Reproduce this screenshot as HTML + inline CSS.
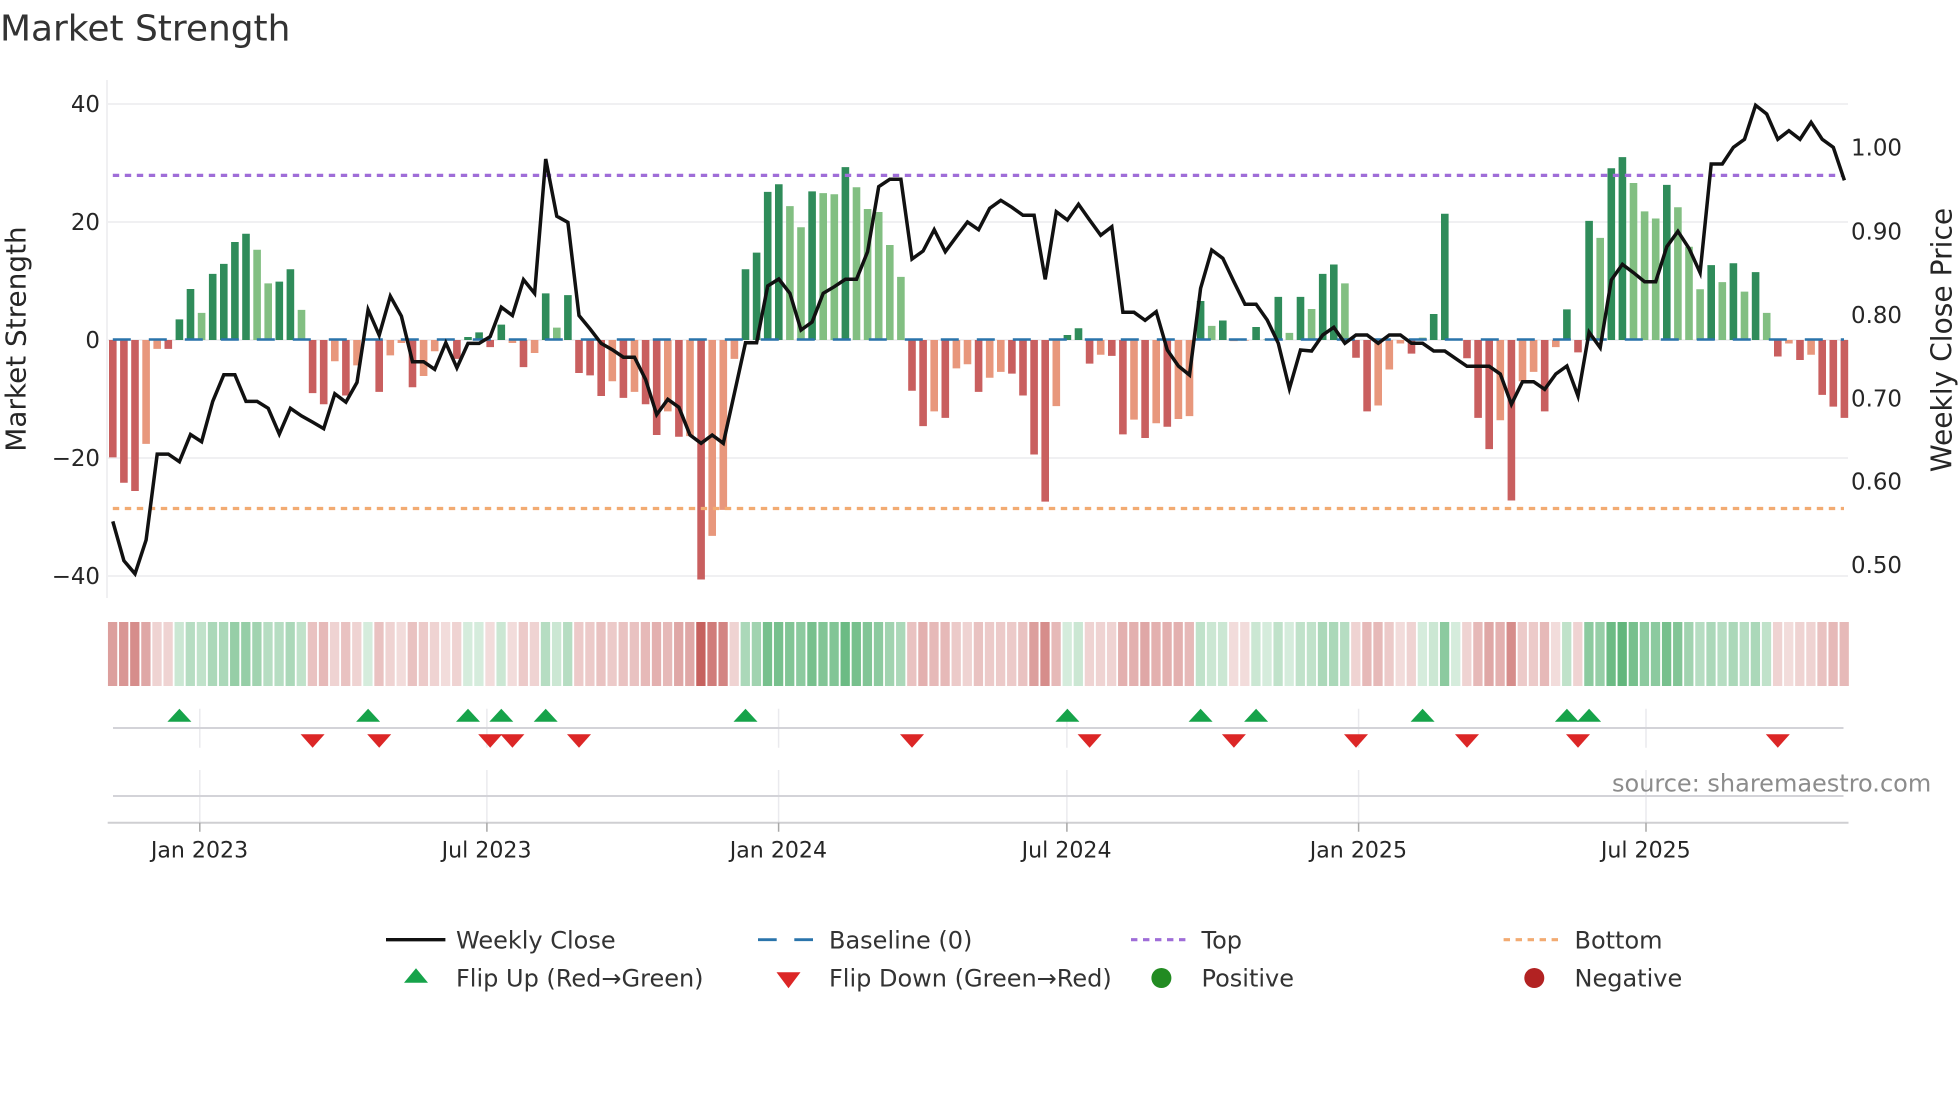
<!DOCTYPE html>
<html lang="en">
<head>
<meta charset="utf-8">
<title>Market Strength</title>
<style>
html,body{margin:0;padding:0;background:#fff}
svg{display:block}
text{font-family:"DejaVu Sans","Liberation Sans",sans-serif}
.n{vector-effect:non-scaling-stroke;fill:none}
</style>
</head>
<body>
<svg width="1960" height="1102" viewBox="0 0 1960 1102" xmlns="http://www.w3.org/2000/svg">
<rect width="1960" height="1102" fill="#fff"/>

<text x="0" y="40.7" font-size="35.95" fill="#333">Market Strength</text>

<!-- grid -->
<g stroke="#f0f0f2" stroke-width="2" fill="none">
<path d="M107 80V598"/>
<path d="M107 104H1848M107 222H1848M107 340H1848M107 458H1848M107 576H1848"/>
</g>

<!-- y labels -->
<g font-size="22.9" fill="#262626" text-anchor="end">
<text x="100" y="112.2">40</text>
<text x="100" y="230.2">20</text>
<text x="100" y="348">0</text>
<text x="100" y="466">−20</text>
<text x="100" y="584">−40</text>
</g>
<g font-size="22.9" fill="#262626">
<text x="1851" y="155.5">1.00</text>
<text x="1851" y="239.5">0.90</text>
<text x="1851" y="323">0.80</text>
<text x="1851" y="406.5">0.70</text>
<text x="1851" y="489.7">0.60</text>
<text x="1851" y="573.2">0.50</text>
</g>
<text transform="translate(25.5 339) rotate(-90)" font-size="27.9" fill="#262626" text-anchor="middle">Market Strength</text>
<text transform="translate(1951.5 340) rotate(-90)" font-size="28.1" fill="#262626" text-anchor="middle">Weekly Close Price</text>

<!-- bars -->
<g transform="translate(112.8 340) scale(11.1 -5.9)">
<path class="n" stroke="#2f8c5a" stroke-width="7.6" d="M6 0V3.5M7 0V8.65M9 0V11.2M10 0V12.9M11 0V16.6M12 0V18M15 0V9.9M16 0V12M32 0V.5M33 0V1.3M35 0V2.6M39 0V7.9M41 0V7.6M57 0V12M58 0V14.8M59 0V25.1M60 0V26.4M63 0V25.2M66 0V29.3M86 0V.85M87 0V2M98 0V6.6M100 0V3.3M103 0V2.2M105 0V7.3M107 0V7.3M109 0V11.2M110 0V12.8M119 0V4.4M120 0V21.4M131 0V5.2M133 0V20.2M135 0V29.1M136 0V31M140 0V26.3M144 0V12.7M146 0V13M148 0V11.5"/>
<path class="n" stroke="#82bf82" stroke-width="7.6" d="M8 0V4.6M13 0V15.3M14 0V9.6M17 0V5.1M23 0V.1M40 0V2.1M61 0V22.7M62 0V19.1M64 0V24.9M65 0V24.7M67 0V25.9M68 0V22.2M69 0V21.7M70 0V16.1M71 0V10.7M99 0V2.4M104 0V.1M106 0V1.2M108 0V5.25M111 0V9.6M118 0V.4M121 0V.1M134 0V17.3M137 0V26.6M138 0V21.8M139 0V20.6M141 0V22.5M142 0V15.8M143 0V8.6M145 0V9.8M147 0V8.2M149 0V4.6"/>
<path class="n" stroke="#c95f5f" stroke-width="7.6" d="M0 0V-19.9M1 0V-24.2M2 0V-25.6M5 0V-1.5M18 0V-9M19 0V-10.9M21 0V-9.4M24 0V-8.8M27 0V-8M31 0V-3.2M34 0V-1.2M37 0V-4.6M42 0V-5.6M43 0V-6M44 0V-9.5M46 0V-9.8M48 0V-10.9M49 0V-16.1M51 0V-16.4M53 0V-40.6M72 0V-8.6M73 0V-14.6M75 0V-13.2M78 0V-8.8M81 0V-5.7M82 0V-9.4M83 0V-19.4M84 0V-27.4M88 0V-4M90 0V-2.7M91 0V-16M93 0V-16.6M95 0V-14.7M112 0V-3M113 0V-12.1M117 0V-2.3M122 0V-3.1M123 0V-13.2M124 0V-18.5M126 0V-27.2M129 0V-12.1M132 0V-2.1M150 0V-2.8M152 0V-3.4M154 0V-9.3M155 0V-11.3M156 0V-13.2"/>
<path class="n" stroke="#e8977c" stroke-width="7.6" d="M3 0V-17.6M4 0V-1.5M20 0V-3.6M22 0V-4.3M25 0V-2.6M26 0V-.5M28 0V-6.1M29 0V-1.9M30 0V-.1M36 0V-.5M38 0V-2.2M45 0V-7M47 0V-8.8M50 0V-12.1M52 0V-16.3M54 0V-33.2M55 0V-28.8M56 0V-3.2M74 0V-12.1M76 0V-4.8M77 0V-4.1M79 0V-6.4M80 0V-5.4M85 0V-11.2M89 0V-2.5M92 0V-13.5M94 0V-14.1M96 0V-13.4M97 0V-12.9M101 0V-.2M102 0V-.1M114 0V-11.1M115 0V-5M116 0V-.6M125 0V-13.6M127 0V-7M128 0V-5.4M130 0V-1.2M151 0V-.6M153 0V-2.5"/>
</g>

<!-- reference lines -->
<path d="M112.8 339.5H1844" stroke="#2a74ab" stroke-width="2.6" stroke-dasharray="18 18" fill="none"/>
<path d="M112.8 175.4H1844" stroke="#9f6dd8" stroke-width="3.2" stroke-dasharray="6.4 5.6" fill="none"/>
<path d="M112.8 508.5H1844" stroke="#f2ab72" stroke-width="3.2" stroke-dasharray="6.4 5.6" fill="none"/>

<!-- weekly close -->
<g transform="translate(112.8 0) scale(11.1 1)">
<polyline class="n" stroke="#111" stroke-width="3.5" stroke-linejoin="miter" stroke-miterlimit="6" points="0,521.4 1,560.7 2,573.8 3,540 4,454.1 5,454.1 6,461.7 7,434.5 8,441.7 9,401.4 10,374.8 11,374.8 12,401.4 13,401.4 14,408.3 15,434.1 16,408.3 17,415.9 18,422.1 19,428.6 20,393.8 21,402.1 22,382.4 23,309.7 24,335.2 25,296.2 26,316.2 27,361.7 28,361.7 29,369.3 30,342.8 31,367.9 32,343.4 33,343.4 34,336.6 35,307.2 36,315.5 37,279.7 38,293.4 39,159 40,216.2 41,222.4 42,315.5 43,329 44,343.4 45,349.7 46,357.2 47,357.2 48,379.5 49,414.6 50,399.3 51,407.3 52,435 53,443.3 54,435 55,443.3 56,393.3 57,342.7 58,342.7 59,286 60,279 61,293.3 62,330 63,322 64,293.3 65,286.7 66,279.3 67,279.3 68,251.7 69,186.7 70,179.3 71,179.3 72,259 73,251 74,229.7 75,251.7 76,236.7 77,222 78,229.7 79,208.3 80,200.3 81,207.3 82,215.3 83,215.3 84,279.3 85,211.7 86,220 87,204.3 88,220 89,235.3 90,226.7 91,312.3 92,312.3 93,320.3 94,311.7 95,350 96,366 97,375 98,288.3 99,250 100,258.3 101,281.7 102,304.3 103,304.3 104,320 105,343.3 106,388.7 107,350 108,351 109,335 110,327.3 111,343.3 112,335 113,335 114,343.3 115,335 116,335 117,343.3 118,343.3 119,351 120,351 121,358.7 122,366.3 123,366.3 124,366.3 125,374 126,404.3 127,381.7 128,381.7 129,389.3 130,374 131,366 132,396 133,332.3 134,347.7 135,280 136,264.3 137,272.7 138,281.7 139,281.7 140,246.7 141,231.3 142,248.3 143,272.7 144,164 145,164 146,147.3 147,139.3 148,105.3 149,114 150,139.3 151,130.7 152,139.3 153,122.3 154,139.3 155,147.3 156,180.3"/>
</g>

<!-- heat strip -->
<g transform="translate(112.6 622) scale(11.1 64)">
<g stroke="#c0504d">
<path class="n" stroke-width="9.3" stroke-opacity=".2" d="M26 0v1M30 0v1M34 0v1M36 0v1M101 0v1M102 0v1M116 0v1M130 0v1M151 0v1"/>
<path class="n" stroke-width="9.3" stroke-opacity=".25" d="M4 0v1M5 0v1M20 0v1M22 0v1M25 0v1M29 0v1M31 0v1M38 0v1M56 0v1M77 0v1M88 0v1M89 0v1M90 0v1M112 0v1M117 0v1M122 0v1M132 0v1M150 0v1M152 0v1M153 0v1"/>
<path class="n" stroke-width="9.3" stroke-opacity=".3" d="M28 0v1M37 0v1M42 0v1M43 0v1M45 0v1M76 0v1M79 0v1M80 0v1M81 0v1M115 0v1M127 0v1M128 0v1"/>
<path class="n" stroke-width="9.3" stroke-opacity=".35" d="M18 0v1M21 0v1M24 0v1M27 0v1M44 0v1M46 0v1M47 0v1M72 0v1M78 0v1M82 0v1M154 0v1"/>
<path class="n" stroke-width="9.3" stroke-opacity=".4" d="M19 0v1M48 0v1M50 0v1M74 0v1M75 0v1M85 0v1M97 0v1M113 0v1M114 0v1M123 0v1M129 0v1M155 0v1M156 0v1"/>
<path class="n" stroke-width="9.3" stroke-opacity=".45" d="M49 0v1M73 0v1M91 0v1M92 0v1M94 0v1M95 0v1M96 0v1M125 0v1"/>
<path class="n" stroke-width="9.3" stroke-opacity=".5" d="M3 0v1M51 0v1M52 0v1M93 0v1M124 0v1"/>
<path class="n" stroke-width="9.3" stroke-opacity=".55" d="M0 0v1M83 0v1"/>
<path class="n" stroke-width="9.3" stroke-opacity=".6" d="M1 0v1"/>
<path class="n" stroke-width="9.3" stroke-opacity=".65" d="M2 0v1M84 0v1M126 0v1"/>
<path class="n" stroke-width="9.3" stroke-opacity=".7" d="M55 0v1"/>
<path class="n" stroke-width="9.3" stroke-opacity=".75" d="M54 0v1"/>
<path class="n" stroke-width="9.3" stroke-opacity=".9" d="M53 0v1"/>
</g>
<g stroke="#2e9e50">
<path class="n" stroke-width="9.3" stroke-opacity=".2" d="M23 0v1M32 0v1M33 0v1M86 0v1M104 0v1M106 0v1M118 0v1M121 0v1"/>
<path class="n" stroke-width="9.3" stroke-opacity=".25" d="M6 0v1M35 0v1M40 0v1M87 0v1M99 0v1M100 0v1M103 0v1M119 0v1"/>
<path class="n" stroke-width="9.3" stroke-opacity=".3" d="M8 0v1M17 0v1M98 0v1M105 0v1M107 0v1M108 0v1M131 0v1M149 0v1"/>
<path class="n" stroke-width="9.3" stroke-opacity=".35" d="M7 0v1M14 0v1M15 0v1M39 0v1M41 0v1M111 0v1M143 0v1M145 0v1M147 0v1"/>
<path class="n" stroke-width="9.3" stroke-opacity=".4" d="M9 0v1M10 0v1M16 0v1M57 0v1M71 0v1M109 0v1M110 0v1M144 0v1M146 0v1M148 0v1"/>
<path class="n" stroke-width="9.3" stroke-opacity=".45" d="M13 0v1M58 0v1M70 0v1M142 0v1"/>
<path class="n" stroke-width="9.3" stroke-opacity=".5" d="M11 0v1M12 0v1M134 0v1"/>
<path class="n" stroke-width="9.3" stroke-opacity=".55" d="M62 0v1M69 0v1M120 0v1M133 0v1M138 0v1M139 0v1"/>
<path class="n" stroke-width="9.3" stroke-opacity=".6" d="M61 0v1M64 0v1M65 0v1M68 0v1M141 0v1"/>
<path class="n" stroke-width="9.3" stroke-opacity=".65" d="M59 0v1M60 0v1M63 0v1M67 0v1M137 0v1M140 0v1"/>
<path class="n" stroke-width="9.3" stroke-opacity=".7" d="M66 0v1M135 0v1"/>
<path class="n" stroke-width="9.3" stroke-opacity=".75" d="M136 0v1"/>
</g>
</g>

<!-- lower panels -->
<g stroke="#eaeaee" stroke-width="1.5" fill="none">
<path d="M199.8 708.7V747.7M486.9 708.7V747.7M778.6 708.7V747.7M1066.9 708.7V747.7M1358.6 708.7V747.7M1646 708.7V747.7"/>
<path d="M199.8 770V822.7M486.9 770V822.7M778.6 770V822.7M1066.9 770V822.7M1358.6 770V822.7M1646 770V822.7"/>
</g>
<g stroke="#d3d3d8" stroke-width="2" fill="none">
<path d="M113 728H1843.5M113 796H1843.5"/>
</g>
<path d="M107.7 822.7H1848.5" stroke="#cfcfd2" stroke-width="2" fill="none"/>
<path d="M199.8 822.7V831.7M486.9 822.7V831.7M778.6 822.7V831.7M1066.9 822.7V831.7M1358.6 822.7V831.7M1646 822.7V831.7" stroke="#a8a8a8" stroke-width="1.5" fill="none"/>

<!-- flip up -->
<g fill="#16a34a">
<path d="M179.4 708.7l12 13h-24z"/>
<path d="M368.1 708.7l12 13h-24z"/>
<path d="M468 708.7l12 13h-24z"/>
<path d="M501.3 708.7l12 13h-24z"/>
<path d="M545.7 708.7l12 13h-24z"/>
<path d="M745.5 708.7l12 13h-24z"/>
<path d="M1067.4 708.7l12 13h-24z"/>
<path d="M1200.6 708.7l12 13h-24z"/>
<path d="M1256.1 708.7l12 13h-24z"/>
<path d="M1422.6 708.7l12 13h-24z"/>
<path d="M1566.9 708.7l12 13h-24z"/>
<path d="M1589.1 708.7l12 13h-24z"/>
</g>
<!-- flip down -->
<g fill="#dc2626">
<path d="M312.6 747.7l-12 -13.4h24z"/>
<path d="M379.2 747.7l-12 -13.4h24z"/>
<path d="M490.2 747.7l-12 -13.4h24z"/>
<path d="M512.4 747.7l-12 -13.4h24z"/>
<path d="M579 747.7l-12 -13.4h24z"/>
<path d="M912 747.7l-12 -13.4h24z"/>
<path d="M1089.6 747.7l-12 -13.4h24z"/>
<path d="M1233.9 747.7l-12 -13.4h24z"/>
<path d="M1356 747.7l-12 -13.4h24z"/>
<path d="M1467 747.7l-12 -13.4h24z"/>
<path d="M1578 747.7l-12 -13.4h24z"/>
<path d="M1777.8 747.7l-12 -13.4h24z"/>
</g>

<text x="1612" y="791.5" font-size="24" fill="#8c8c8c">source: sharemaestro.com</text>

<!-- date labels -->
<g font-size="22.1" fill="#262626" text-anchor="middle">
<text x="199.5" y="857.7">Jan 2023</text>
<text x="486.6" y="857.7">Jul 2023</text>
<text x="778.4" y="857.7">Jan 2024</text>
<text x="1066.6" y="857.7">Jul 2024</text>
<text x="1358.4" y="857.7">Jan 2025</text>
<text x="1645.8" y="857.7">Jul 2025</text>
</g>

<!-- legend -->
<path d="M386 939.7H445.4" stroke="#111" stroke-width="3.4" fill="none"/>
<path d="M758 939.7H813" stroke="#2a74ab" stroke-width="2.8" stroke-dasharray="18.7 17.6" fill="none"/>
<path d="M1131 939.7H1186" stroke="#9f6dd8" stroke-width="3.2" stroke-dasharray="6.4 5.6" fill="none"/>
<path d="M1503.6 939.7H1558.3" stroke="#f2ab72" stroke-width="3.2" stroke-dasharray="6.4 5.6" fill="none"/>
<path d="M416 968.3l12 14.4h-24z" fill="#16a34a"/>
<path d="M788.5 988.3l-12 -16h24z" fill="#dc2626"/>
<circle cx="1161.4" cy="978" r="10" fill="#228b22"/>
<circle cx="1534.3" cy="978" r="10" fill="#b22222"/>
<g font-size="24" fill="#333">
<text x="456" y="948.5">Weekly Close</text>
<text x="456" y="986.5">Flip Up (Red→Green)</text>
<text x="829" y="948.5">Baseline (0)</text>
<text x="829" y="986.5">Flip Down (Green→Red)</text>
<text x="1201.5" y="948.5">Top</text>
<text x="1201.5" y="986.5">Positive</text>
<text x="1574.5" y="948.5">Bottom</text>
<text x="1574.5" y="986.5">Negative</text>
</g>
</svg>
</body>
</html>
